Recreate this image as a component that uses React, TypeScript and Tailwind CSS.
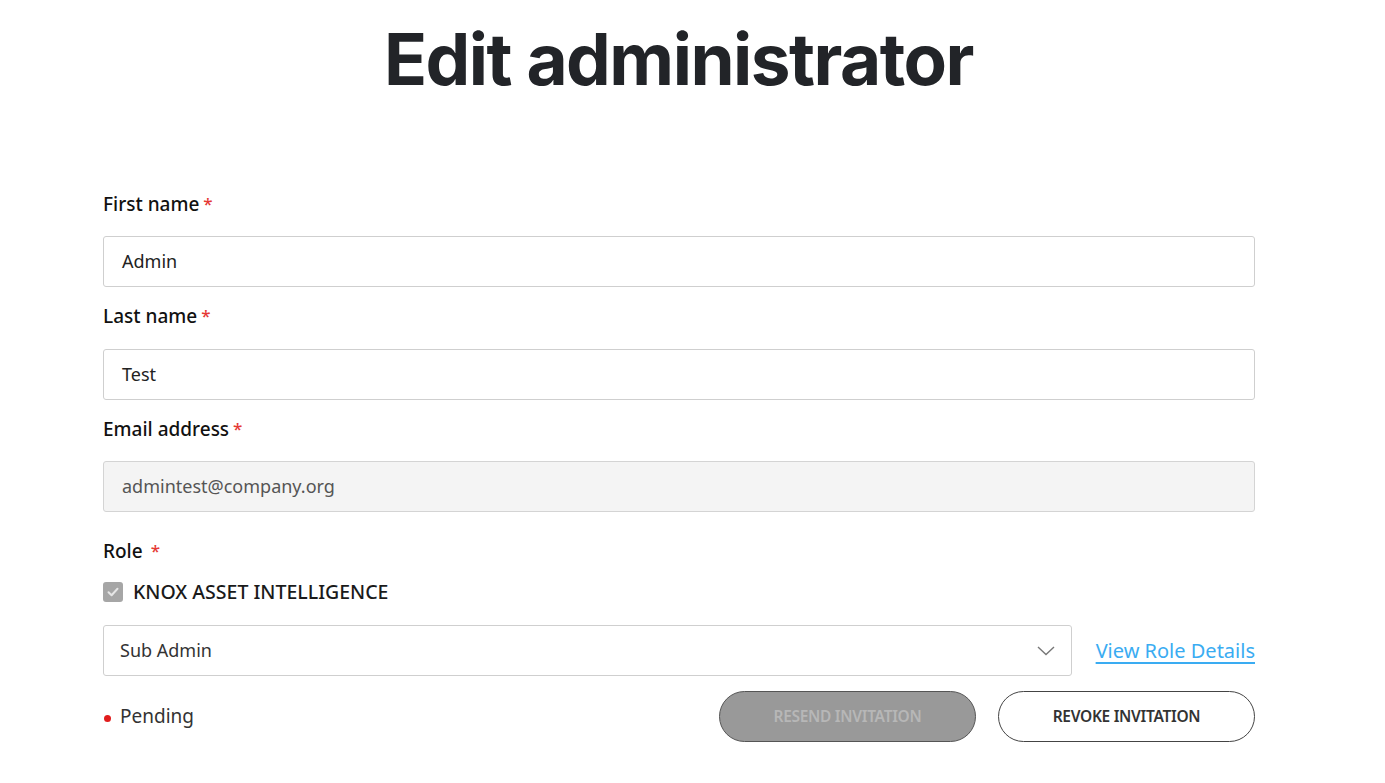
import React from "react";

const body = { fontFamily: '"Noto Sans", "Open Sans", sans-serif' };

function Label({ text, gap = false }: { text: string; gap?: boolean }) {
  return (
    <div className="flex items-center h-[26px] text-[19px] font-medium text-[#111]">
      <span>{text}</span>
      <span className={`text-[#e53935] text-[17px] ${gap ? "ml-2" : "ml-1"}`}>*</span>
    </div>
  );
}

export default function App() {
  return (
    <div className="w-[1385px] h-[783px] bg-white overflow-hidden" style={body}>
      <h1
        className="text-center text-[#222428] font-bold text-[71px] leading-none pt-[24px] pr-[28px] tracking-[-1.5px]"
        style={{ fontFamily: 'Inter, "Noto Sans", sans-serif' }}
      >
        Edit administrator
      </h1>
      <div className="w-[1152px] ml-[103px] mt-[96px]">
        <Label text="First name" />
        <div className="mt-[19px] h-[51px] border border-[#cfcfcf] rounded-[3px] flex items-center px-[18px] text-[18px] text-[#222]">
          Admin
        </div>
        <div className="mt-[16px]">
          <Label text="Last name" />
        </div>
        <div className="mt-[20px] h-[51px] border border-[#cfcfcf] rounded-[3px] flex items-center px-[18px] text-[18px] text-[#222]">
          Test
        </div>
        <div className="mt-[16px]">
          <Label text="Email address" />
        </div>
        <div className="mt-[19px] h-[51px] border border-[#d4d4d4] bg-[#f4f4f4] rounded-[3px] flex items-center px-[18px] text-[18px] text-[#555]">
          admintest@company.org
        </div>
        <div className="mt-[26px]">
          <Label text="Role" gap />
        </div>
        <div className="mt-[15px] h-[26px] flex items-center">
          <div className="w-[20px] h-[20px] rounded-[3px] bg-[#a6a6a6] flex items-center justify-center">
            <svg width="14" height="14" viewBox="0 0 14 14" fill="none">
              <path d="M2.5 7.2 L5.6 10.2 L11.5 3.8" stroke="#e6e6e6" strokeWidth="2" strokeLinecap="round" strokeLinejoin="round" />
            </svg>
          </div>
          <span className="ml-[10px] text-[19.5px] font-medium text-[#1a1a1a]">KNOX ASSET INTELLIGENCE</span>
        </div>
        <div className="mt-[20px] flex items-center">
          <div className="w-[969px] h-[51px] border border-[#cfcfcf] rounded-[3px] flex items-center justify-between pl-[16px] pr-[16px] text-[18px] text-[#333]">
            <span>Sub Admin</span>
            <svg width="18" height="10" viewBox="0 0 18 10" fill="none">
              <path d="M1 1 L9 8.5 L17 1" stroke="#777" strokeWidth="1.4" />
            </svg>
          </div>
          <a className="ml-auto text-[20px] text-[#3aacf2] underline decoration-[2px] underline-offset-[4px]">View Role Details</a>
        </div>
        <div className="mt-[15px] flex items-center h-[51px]">
          <span className="w-[7px] h-[7px] rounded-full bg-[#e11d1d] ml-[1px] mt-[4px]" />
          <span className="ml-[9px] text-[19px] text-[#333]">Pending</span>
          <button className="ml-auto w-[257px] h-[51px] rounded-full bg-[#999999] border border-[#555] text-[15.5px] font-semibold text-[#b7b7b7] tracking-[-0.3px]">
            RESEND INVITATION
          </button>
          <button className="ml-[22px] w-[257px] h-[51px] rounded-full bg-white border border-[#444] text-[15.5px] font-semibold text-[#333] tracking-[-0.3px]">
            REVOKE INVITATION
          </button>
        </div>
      </div>
    </div>
  );
}
